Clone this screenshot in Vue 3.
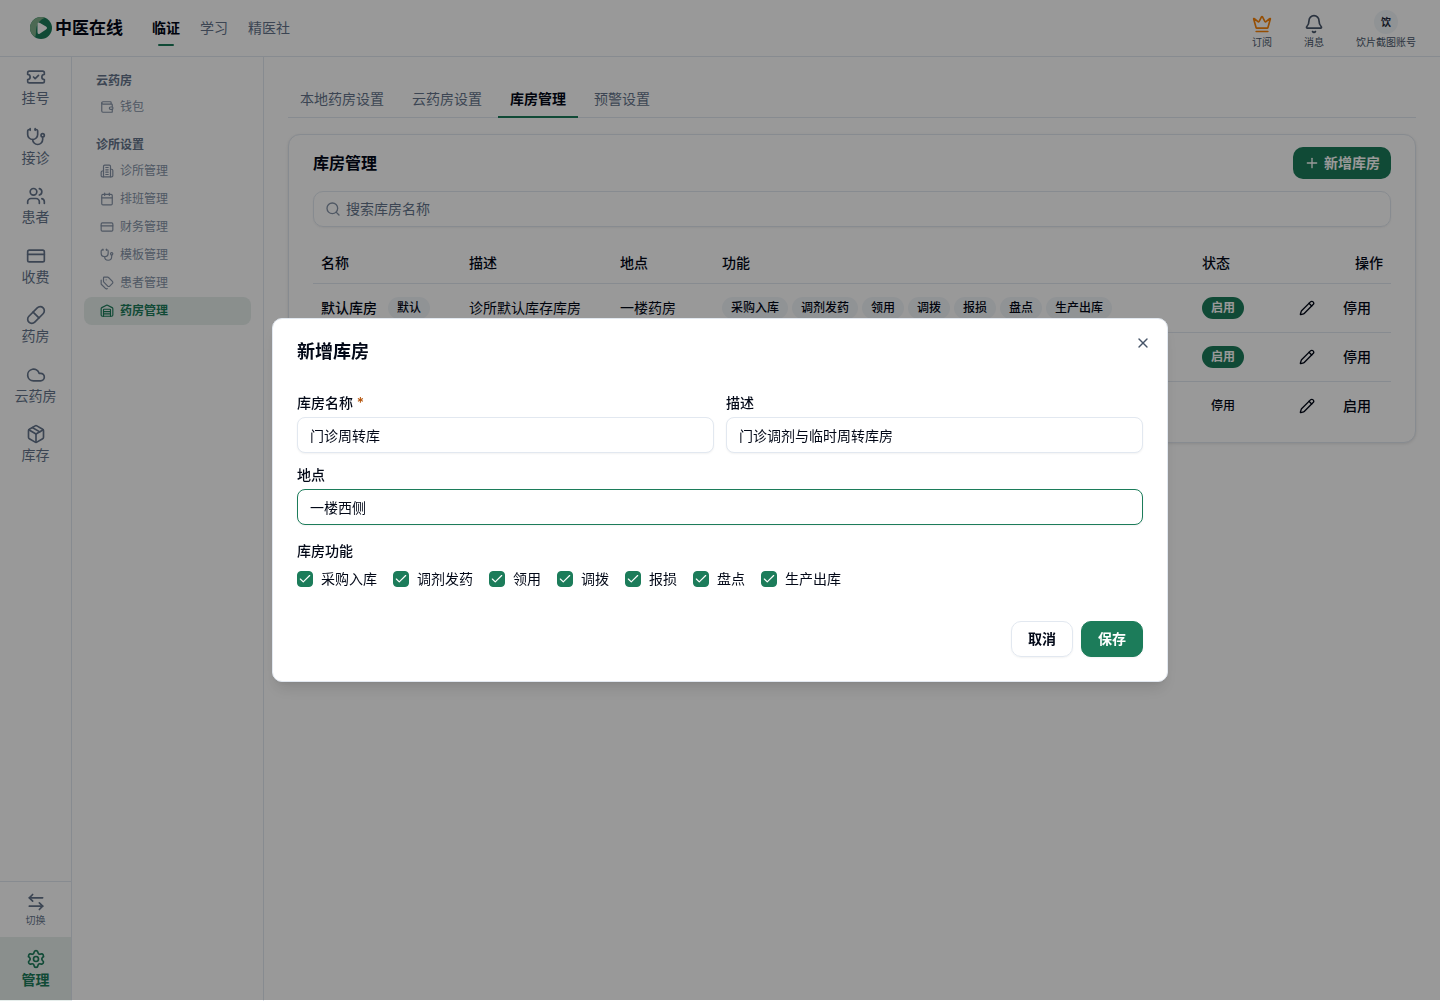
<script setup>
import { h, ref } from 'vue';

const icons = {
  ticket: ['M2 9a3 3 0 0 1 0 6v2a2 2 0 0 0 2 2h16a2 2 0 0 0 2-2v-2a3 3 0 0 1 0-6V7a2 2 0 0 0-2-2H4a2 2 0 0 0-2 2Z', 'm9 12 2 2 4-4'],
  stethoscope: ['M11 2v2', 'M5 2v2', 'M5 3H4a2 2 0 0 0-2 2v4a6 6 0 0 0 12 0V5a2 2 0 0 0-2-2h-1', 'M8 15a6 6 0 0 0 12 0v-3', 'M18 10a2 2 0 1 0 4 0a2 2 0 1 0-4 0'],
  users: ['M16 21v-2a4 4 0 0 0-4-4H6a4 4 0 0 0-4 4v2', 'M5 7a4 4 0 1 0 8 0a4 4 0 1 0-8 0', 'M22 21v-2a4 4 0 0 0-3-3.87', 'M16 3.13a4 4 0 0 1 0 7.75'],
  card: ['M4 5h16a2 2 0 0 1 2 2v10a2 2 0 0 1-2 2H4a2 2 0 0 1-2-2V7a2 2 0 0 1 2-2Z', 'M2 10h20'],
  pill: ['m10.5 20.5 10-10a4.95 4.95 0 1 0-7-7l-10 10a4.95 4.95 0 1 0 7 7Z', 'm8.5 8.5 7 7'],
  cloud: ['M17.5 19H9a7 7 0 1 1 6.71-9h1.79a4.5 4.5 0 1 1 0 9Z'],
  box: ['M11 21.73a2 2 0 0 0 2 0l7-4A2 2 0 0 0 21 16V8a2 2 0 0 0-1-1.73l-7-4a2 2 0 0 0-2 0l-7 4A2 2 0 0 0 3 8v8a2 2 0 0 0 1 1.73z', 'M12 22V12', 'M3.29 7 12 12l8.71-5', 'm7.5 4.27 9 5.15'],
  swap: ['M8 3 4 7l4 4', 'M4 7h16', 'm16 21 4-4-4-4', 'M20 17H4'],
  settings: ['M9.671 4.136a2.34 2.34 0 0 1 4.659 0 2.34 2.34 0 0 0 3.319 1.915 2.34 2.34 0 0 1 2.33 4.033 2.34 2.34 0 0 0 0 3.831 2.34 2.34 0 0 1-2.33 4.033 2.34 2.34 0 0 0-3.319 1.915 2.34 2.34 0 0 1-4.659 0 2.34 2.34 0 0 0-3.32-1.915 2.34 2.34 0 0 1-2.33-4.033 2.34 2.34 0 0 0 0-3.831A2.34 2.34 0 0 1 6.35 6.051a2.34 2.34 0 0 0 3.319-1.915', 'M9 12a3 3 0 1 0 6 0a3 3 0 1 0-6 0'],
  crown: ['M11.562 3.266a.5.5 0 0 1 .876 0L15.39 8.87a1 1 0 0 0 1.516.294L21.183 5.5a.5.5 0 0 1 .798.519l-2.834 10.246a1 1 0 0 1-.956.734H5.81a1 1 0 0 1-.957-.734L2.02 6.02a.5.5 0 0 1 .798-.519l4.276 3.664a1 1 0 0 0 1.516-.294z', 'M5 21h14'],
  bell: ['M10.268 21a2 2 0 0 0 3.464 0', 'M3.262 15.326A1 1 0 0 0 4 17h16a1 1 0 0 0 .74-1.673C19.41 13.956 18 12.499 18 8A6 6 0 0 0 6 8c0 4.499-1.411 5.956-2.738 7.326'],
  wallet: ['M19 7V4a1 1 0 0 0-1-1H5a2 2 0 0 0 0 4h15a1 1 0 0 1 1 1v4h-3a2 2 0 0 0 0 4h3a1 1 0 0 0 1-1v-2a1 1 0 0 0-1-1', 'M3 5v14a2 2 0 0 0 2 2h15a1 1 0 0 0 1-1v-4'],
  building: ['M6 22V4a2 2 0 0 1 2-2h8a2 2 0 0 1 2 2v18Z', 'M6 12H4a2 2 0 0 0-2 2v6a2 2 0 0 0 2 2h2', 'M18 9h2a2 2 0 0 1 2 2v9a2 2 0 0 1-2 2h-2', 'M10 6h4', 'M10 10h4', 'M10 14h4', 'M10 18h4'],
  calendar: ['M8 2v4', 'M16 2v4', 'M5 4h14a2 2 0 0 1 2 2v14a2 2 0 0 1-2 2H5a2 2 0 0 1-2-2V6a2 2 0 0 1 2-2Z', 'M3 10h18'],
  tags: ['M13.172 2a2 2 0 0 1 1.414.586l6.71 6.71a2.4 2.4 0 0 1 0 3.408l-4.592 4.592a2.4 2.4 0 0 1-3.408 0l-6.71-6.71A2 2 0 0 1 6 9.172V3a1 1 0 0 1 1-1z', 'M2 7v6.172a2 2 0 0 0 .586 1.414l6.71 6.71a2.4 2.4 0 0 0 3.191.193', 'M10.5 6.5h.01'],
  warehouse: ['M18 21V10a1 1 0 0 0-1-1H7a1 1 0 0 0-1 1v11', 'M22 19a2 2 0 0 1-2 2H4a2 2 0 0 1-2-2V8a2 2 0 0 1 1.132-1.803l7.95-3.974a2 2 0 0 1 1.837 0l7.948 3.974A2 2 0 0 1 22 8z', 'M6 13h12', 'M6 17h12'],
  search: ['M3 11a8 8 0 1 0 16 0a8 8 0 1 0-16 0', 'm21 21-4.34-4.34'],
  plus: ['M5 12h14', 'M12 5v14'],
  pencil: ['M21.174 6.812a1 1 0 0 0-3.986-3.987L3.842 16.174a2 2 0 0 0-.5.83l-1.321 4.352a.5.5 0 0 0 .623.622l4.353-1.32a2 2 0 0 0 .83-.497z', 'm15 5 4 4'],
  close: ['M18 6 6 18', 'm6 6 12 12'],
  check: ['M20 6 9 17l-5-5'],
};

const Icon = ({ name, size = 20, stroke = 2 }) =>
  h('svg', {
    width: size,
    height: size,
    viewBox: '0 0 24 24',
    fill: 'none',
    stroke: 'currentColor',
    'stroke-width': stroke,
    'stroke-linecap': 'round',
    'stroke-linejoin': 'round',
    'aria-hidden': 'true',
  }, icons[name].map(d => h('path', { d })));
Icon.props = ['name', 'size', 'stroke'];

const topLinks = ['临证', '学习', '精医社'];

const rail = [
  { icon: 'ticket', label: '挂号' },
  { icon: 'stethoscope', label: '接诊' },
  { icon: 'users', label: '患者' },
  { icon: 'card', label: '收费' },
  { icon: 'pill', label: '药房' },
  { icon: 'cloud', label: '云药房' },
  { icon: 'box', label: '库存' },
];

const sections = [
  { title: '云药房', items: [{ icon: 'wallet', label: '钱包' }] },
  {
    title: '诊所设置',
    items: [
      { icon: 'building', label: '诊所管理' },
      { icon: 'calendar', label: '排班管理' },
      { icon: 'card', label: '财务管理' },
      { icon: 'stethoscope', label: '模板管理' },
      { icon: 'tags', label: '患者管理' },
      { icon: 'warehouse', label: '药房管理' },
    ],
  },
];

const tabs = ['本地药房设置', '云药房设置', '库房管理', '预警设置'];
const activeTab = ref('库房管理');

const features = ['采购入库', '调剂发药', '领用', '调拨', '报损', '盘点', '生产出库'];

const rows = ref([
  { name: '默认库房', isDefault: true, desc: '诊所默认库存库房', place: '一楼药房', features, enabled: true },
  { features: [], enabled: true },
  { features: [], enabled: false },
]);

const keyword = ref('');
const open = ref(true);
const form = ref({
  name: '门诊周转库',
  desc: '门诊调剂与临时周转库房',
  place: '一楼西侧',
  features: [...features],
});
</script>

<template>
  <div class="app">
    <header class="topbar">
      <a class="brand" href="#">
        <svg width="22" height="22" viewBox="0 0 22 22" aria-hidden="true">
          <circle cx="11" cy="11" r="11" fill="#1c7c5a" />
          <path d="M15 .75A11 11 0 0 0 5 20.220C6.500 18 5.500 14 6.500 10C7.500 6 10.500 2.500 15 .75Z" fill="#7fb08a" />
          <path d="M7.500 7.500Q7.500 4.500 10 6L16 9.500Q18 11 16 12.500L10 16.500Q7.500 18 7.500 15Z" fill="#fff" />
        </svg>
        <span>中医在线</span>
      </a>
      <nav class="top-links">
        <a v-for="(link, i) in topLinks" :key="link" href="#" :class="{ active: i === 0 }">{{ link }}</a>
      </nav>
      <div class="top-actions">
        <button type="button" class="top-action">
          <Icon name="crown" class="crown" />
          <span>订阅</span>
        </button>
        <button type="button" class="top-action">
          <Icon name="bell" />
          <span>消息</span>
        </button>
        <button type="button" class="top-action">
          <span class="avatar">饮</span>
          <span>饮片截图账号</span>
        </button>
      </div>
    </header>

    <div class="body">
      <nav class="rail">
        <a v-for="item in rail" :key="item.label" class="rail-item" href="#">
          <Icon :name="item.icon" />
          <span>{{ item.label }}</span>
        </a>
        <div class="rail-bottom">
          <button type="button" class="rail-item switch">
            <Icon name="swap" />
            <span>切换</span>
          </button>
          <a class="rail-item manage" href="#">
            <Icon name="settings" />
            <span>管理</span>
          </a>
        </div>
      </nav>

      <aside class="submenu">
        <section v-for="section in sections" :key="section.title">
          <h2>{{ section.title }}</h2>
          <a v-for="item in section.items" :key="item.label" class="sub-item" :class="{ active: item.label === '药房管理' }"
            href="#">
            <Icon :name="item.icon" :size="14" />
            <span>{{ item.label }}</span>
          </a>
        </section>
      </aside>

      <main class="main">
        <div class="tabs" role="tablist">
          <button v-for="tab in tabs" :key="tab" type="button" role="tab" class="tab" :class="{ active: tab === activeTab }"
            @click="activeTab = tab">{{ tab }}</button>
        </div>

        <section class="card">
          <div class="card-head">
            <h1>库房管理</h1>
            <button type="button" class="add" @click="open = true">
              <Icon name="plus" :size="16" />
              <span>新增库房</span>
            </button>
          </div>

          <label class="search">
            <Icon name="search" :size="16" />
            <input v-model="keyword" type="text" placeholder="搜索库房名称" aria-label="搜索库房名称">
          </label>

          <table>
            <colgroup>
              <col class="col-name">
              <col class="col-desc">
              <col class="col-place">
              <col>
              <col class="col-status">
              <col class="col-actions">
            </colgroup>
            <thead>
              <tr>
                <th>名称</th>
                <th>描述</th>
                <th>地点</th>
                <th>功能</th>
                <th>状态</th>
                <th class="right">操作</th>
              </tr>
            </thead>
            <tbody>
              <tr v-for="(row, i) in rows" :key="i">
                <td>
                  <div v-if="row.name" class="name">
                    <span>{{ row.name }}</span>
                    <span v-if="row.isDefault" class="badge">默认</span>
                  </div>
                </td>
                <td>{{ row.desc }}</td>
                <td>{{ row.place }}</td>
                <td>
                  <div class="badges">
                    <span v-for="f in row.features" :key="f" class="badge">{{ f }}</span>
                  </div>
                </td>
                <td>
                  <div class="badges">
                    <span class="badge" :class="row.enabled ? 'on' : 'off'">{{ row.enabled ? '启用' : '停用' }}</span>
                  </div>
                </td>
                <td>
                  <div class="actions">
                    <button type="button" class="edit" aria-label="编辑">
                      <Icon name="pencil" :size="16" />
                    </button>
                    <button type="button" class="toggle" @click="row.enabled = !row.enabled">{{ row.enabled ? '停用' : '启用' }}</button>
                  </div>
                </td>
              </tr>
            </tbody>
          </table>
        </section>
      </main>
    </div>

    <!-- Dialog -->
    <div v-if="open" class="overlay">
      <form class="dialog" role="dialog" aria-modal="true" aria-labelledby="dialog-title" @submit.prevent="open = false">
        <button type="button" class="close" aria-label="关闭" @click="open = false">
          <Icon name="close" :size="16" />
        </button>
        <h2 id="dialog-title">新增库房</h2>
        <div class="fields">
          <div class="field">
            <label for="name">库房名称 <span class="required">*</span></label>
            <input id="name" v-model="form.name" type="text">
          </div>
          <div class="field">
            <label for="desc">描述</label>
            <input id="desc" v-model="form.desc" type="text">
          </div>
          <div class="field wide">
            <label for="place">地点</label>
            <input id="place" v-model="form.place" class="current" type="text">
          </div>
        </div>
        <fieldset>
          <legend>库房功能</legend>
          <div class="checks">
            <label v-for="f in features" :key="f" class="check">
              <span class="tick">
                <input v-model="form.features" type="checkbox" :value="f">
                <Icon name="check" :size="14" />
              </span>
              <span>{{ f }}</span>
            </label>
          </div>
        </fieldset>
        <div class="dialog-foot">
          <button type="button" class="cancel" @click="open = false">取消</button>
          <button type="submit" class="save">保存</button>
        </div>
      </form>
    </div>
  </div>
</template>

<style>
body {
  margin: 0;
  background: #fff;
}
</style>

<style scoped>
.app {
  --green: #1c7c5a;
  --border: #e2e8f0;
  --muted: #64748b;
  --ink: #020817;
  --soft: #f1f5f9;
  display: flex;
  flex-direction: column;
  min-height: 100vh;
  font-family: Inter, 'Noto Sans CJK SC', sans-serif;
  font-size: 14px;
  line-height: 20px;
  color: var(--ink);
}

.app *,
.app *::after {
  box-sizing: border-box;
}

a {
  color: inherit;
  text-decoration: none;
}

button,
input {
  margin: 0;
  font: inherit;
  color: inherit;
}

button {
  padding: 0;
  border: 0;
  background: none;
  cursor: pointer;
}

svg {
  display: block;
  flex: none;
}

h1,
h2 {
  margin: 0;
}

.topbar {
  display: flex;
  align-items: center;
  height: 57px;
  padding: 0 24px 0 30px;
  border-bottom: 1px solid var(--border);
}

.brand {
  display: flex;
  align-items: center;
  gap: 3px;
  margin-right: 29px;
  font-size: 17px;
  font-weight: 600;
}

.top-links {
  display: flex;
  gap: 20px;
  color: var(--muted);
}

.top-links a {
  position: relative;
  line-height: 36px;
}

.top-links .active {
  color: var(--ink);
  font-weight: 600;
}

.top-links .active::after {
  content: '';
  position: absolute;
  left: 6px;
  right: 6px;
  bottom: 0;
  height: 2px;
  border-radius: 1px;
  background: var(--green);
}

.top-actions {
  display: flex;
  align-items: flex-end;
  gap: 32px;
  margin-left: auto;
  padding-top: 3px;
}

.top-action {
  display: flex;
  flex-direction: column;
  align-items: center;
  gap: 1px;
  font-size: 10px;
  line-height: 14px;
  color: #475569;
}

.crown {
  color: #f98307;
}

.avatar {
  width: 24px;
  height: 24px;
  border-radius: 50%;
  background: var(--soft);
  color: #1e293b;
  font-weight: 600;
  line-height: 24px;
}

.body {
  display: flex;
  flex: 1;
}

.rail {
  display: flex;
  flex-direction: column;
  flex: none;
  width: 72px;
  border-right: 1px solid var(--border);
  color: var(--muted);
}

.rail-item {
  display: flex;
  flex-direction: column;
  align-items: center;
  gap: 2px;
  width: 100%;
  padding: 10px 0;
  line-height: 1.25;
}

.rail-bottom {
  margin-top: auto;
  border-top: 1px solid var(--border);
}

.rail-item.switch {
  height: 55px;
  font-size: 10px;
}

.rail-item.manage {
  justify-content: center;
  height: 64px;
  background: #e6eeec;
  color: var(--green);
  font-weight: 600;
}

.submenu {
  display: flex;
  flex-direction: column;
  gap: 12px;
  flex: none;
  width: 192px;
  padding: 12px;
  border-right: 1px solid var(--border);
}

.submenu h2 {
  padding: 0 12px;
  font-size: 12px;
  font-weight: 600;
  line-height: 24px;
  color: var(--muted);
}

.sub-item {
  display: flex;
  align-items: center;
  gap: 6px;
  height: 28px;
  padding: 0 16px;
  border-radius: 8px;
  font-size: 12px;
  color: #8593a7;
}

.sub-item.active {
  background: #e6eeec;
  color: var(--green);
  font-weight: 600;
}

.main {
  flex: 1;
  min-width: 0;
  padding: 24px;
}

.tabs {
  display: flex;
  gap: 4px;
  height: 37px;
  border-bottom: 1px solid var(--border);
}

.tab {
  height: 37px;
  padding: 0 12px;
  border-bottom: 2px solid transparent;
  color: var(--muted);
}

.tab.active {
  border-color: var(--green);
  color: var(--ink);
  font-weight: 600;
}

.card {
  margin-top: 16px;
  padding: 12px 24px;
  border: 1px solid var(--border);
  border-radius: 12px;
  background: #fff;
  box-shadow: 0 1px 3px rgba(0, 0, 0, 0.1);
}

.card-head {
  display: flex;
  align-items: center;
  justify-content: space-between;
  margin-bottom: 12px;
}

.card-head h1 {
  font-size: 16px;
  font-weight: 600;
}

.add {
  display: flex;
  align-items: center;
  gap: 4px;
  height: 32px;
  padding: 0 11px;
  border-radius: 10px;
  background: var(--green);
  color: #fff;
  font-weight: 600;
}

.search {
  display: flex;
  align-items: center;
  gap: 5px;
  height: 36px;
  margin-bottom: 16px;
  padding: 0 11px;
  border: 1px solid var(--border);
  border-radius: 10px;
  color: #8593a7;
  box-shadow: 0 1px 2px rgba(0, 0, 0, 0.05);
}

.search input {
  flex: 1;
  padding: 0;
  border: 0;
  outline: 0;
  background: none;
  color: var(--ink);
}

.search input::placeholder {
  color: var(--muted);
  opacity: 1;
}

table {
  width: 100%;
  border-collapse: separate;
  border-spacing: 0;
  table-layout: fixed;
}

.col-name {
  width: 148px;
}

.col-desc {
  width: 151px;
}

.col-place {
  width: 102px;
}

.col-status {
  width: 89px;
}

.col-actions {
  width: 108px;
}

th,
td {
  padding: 0 8px;
  border-bottom: 1px solid var(--border);
  text-align: left;
  white-space: nowrap;
}

th {
  height: 41px;
  font-weight: 500;
}

td {
  height: 49px;
}

tbody tr:last-child td {
  height: 48px;
  border-bottom: 0;
}

.right {
  text-align: right;
}

.name {
  display: flex;
  align-items: center;
  gap: 11px;
  font-weight: 500;
}

.badges {
  display: flex;
  gap: 4px;
}

.badge {
  height: 22px;
  padding: 0 9px;
  border-radius: 11px;
  background: var(--soft);
  font-size: 12px;
  font-weight: 500;
  line-height: 22px;
}

.badge.on {
  background: var(--green);
  color: #fff;
  font-weight: 600;
}

.badge.off {
  background: none;
}

.actions {
  display: flex;
  justify-content: flex-end;
  gap: 8px;
}

.edit {
  display: grid;
  place-items: center;
  width: 32px;
  height: 32px;
}

.toggle {
  height: 32px;
  padding: 0 12px;
  font-weight: 500;
}

.overlay {
  position: fixed;
  inset: 0 0 1px;
  display: grid;
  place-items: center;
  background: rgba(0, 0, 0, 0.4);
}

.dialog {
  position: relative;
  width: 100%;
  max-width: 896px;
  padding: 24px;
  border: 1px solid var(--border);
  border-radius: 10px;
  background: #fff;
  box-shadow: 0 10px 15px -3px rgba(0, 0, 0, 0.1), 0 4px 6px -4px rgba(0, 0, 0, 0.1);
}

.dialog h2 {
  margin-bottom: 32px;
  font-size: 18px;
  font-weight: 600;
  line-height: 18px;
}

.close {
  position: absolute;
  top: 16px;
  right: 16px;
  color: #475569;
}

.fields {
  display: grid;
  grid-template-columns: 1fr 1fr;
  gap: 12px;
}

.field {
  display: flex;
  flex-direction: column;
  gap: 4px;
  font-weight: 500;
}

.field.wide {
  grid-column: 1 / -1;
}

.field input {
  width: 100%;
  height: 36px;
  padding: 0 12px;
  border: 1px solid var(--border);
  border-radius: 8px;
  outline: 0;
  background: #fff;
  font-weight: 400;
  box-shadow: 0 1px 2px rgba(0, 0, 0, 0.05);
}

.field input.current,
.field input:focus {
  border-color: var(--green);
}

.required {
  color: #b45309;
}

fieldset {
  min-width: 0;
  margin: 16px 0 32px;
  padding: 0;
  border: 0;
}

legend {
  padding: 0;
  font-weight: 500;
}

.checks {
  display: flex;
  flex-wrap: wrap;
  gap: 16px;
  padding-top: 8px;
}

.check {
  display: flex;
  align-items: center;
  gap: 8px;
}

.tick {
  display: grid;
  place-items: center;
  color: #fff;
}

.tick > * {
  grid-area: 1 / 1;
}

.tick input {
  appearance: none;
  width: 16px;
  height: 16px;
  border: 1px solid var(--green);
  border-radius: 4px;
}

.tick input:checked {
  background: var(--green);
}

.tick svg {
  position: relative;
  pointer-events: none;
}

.dialog-foot {
  display: flex;
  justify-content: flex-end;
  gap: 8px;
}

.cancel,
.save {
  height: 36px;
  padding: 0 16px;
  border: 1px solid var(--border);
  border-radius: 10px;
  font-weight: 600;
  box-shadow: 0 1px 2px rgba(0, 0, 0, 0.05);
}

.save {
  border-color: var(--green);
  background: var(--green);
  color: #fff;
}
</style>
